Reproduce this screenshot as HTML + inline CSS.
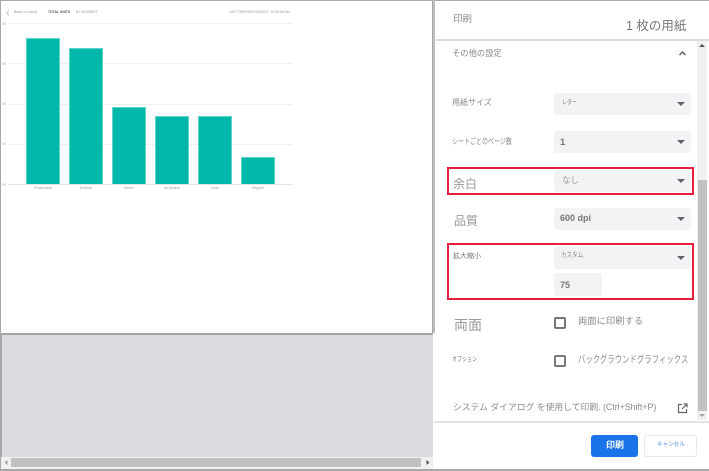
<!DOCTYPE html>
<html><head><meta charset="utf-8"><style>
html,body{margin:0;padding:0;background:#fff}
#r{position:relative;width:709px;height:471px;overflow:hidden;background:#fff;font-family:"Liberation Sans","Noto Sans CJK JP",sans-serif}
#r div,#r span,#r svg{position:absolute}
.t{white-space:nowrap;color:#8a8a8a;line-height:1}
.n{transform-origin:0 0}
.s{left:554px;width:137px;background:#f1f3f4;border-radius:3px}
.s i{position:absolute;right:6px;top:50%;margin-top:-2px;width:0;height:0;border-left:4px solid transparent;border-right:4px solid transparent;border-top:4px solid #5f6368}
.b{background:#00b8aa;width:34px;border:1px solid #5fd3ca;border-bottom:0;box-sizing:border-box}
.g{left:8px;width:285px;height:1px;background:#f0f0f0}
.c{color:#a0a0a0;font-size:3.400px;text-align:center;width:50px;top:186px;line-height:5px}
.y{color:#b0b0b0;font-size:3.500px;left:2px;line-height:4px}
.k{left:553.500px;width:12px;height:12px;border:2px solid #74787d;border-radius:2px;box-sizing:border-box}
.red{border:2px solid #ea1f40;box-sizing:border-box;left:447px;width:247px}
</style></head><body><div id="r">
<div style="left:0;top:0;width:433px;height:471px;background:#dadbdf"></div>
<div style="left:0;top:0;width:709px;height:1.500px;background:#a8a8a8"></div>
<div style="left:0;top:0;width:1.500px;height:471px;background:#a8a8a8"></div>
<div style="left:1px;top:1px;width:431px;height:332px;background:#fff;border-right:1px solid #a9a9a9;border-bottom:2px solid #a5a5a5"></div>

<svg style="left:5px;top:9px" width="6" height="8" viewBox="0 0 6 8"><path d="M4 1.500L1.500 4 4 6.500" fill="none" stroke="#aaa" stroke-width=".7"/></svg>
<div class="t" style="left:14px;top:11px;font-size:3.700px;color:#999">Back to report</div>
<div class="t" style="left:48px;top:11px;font-size:3.400px;color:#555;font-weight:bold">TOTAL UNITS</div>
<div class="t" style="left:76px;top:11px;font-size:3.300px;color:#999">BY SEGMENT</div>
<div class="t" style="left:229px;top:11px;font-size:3.400px;color:#999">LAST REFRESH 6/2/2021, 10:28:58 AM</div>

<div class="g" style="top:23px"></div><div class="g" style="top:63px"></div><div class="g" style="top:104px"></div><div class="g" style="top:144px"></div><div class="g" style="top:184px;background:#e4e4e4"></div>
<div class="t y" style="top:22px">8K</div><div class="t y" style="top:62px">6K</div><div class="t y" style="top:102px">4K</div><div class="t y" style="top:142px">2K</div><div class="t y" style="top:183px">0K</div>
<div class="b" style="left:26px;top:38px;height:146px"></div>
<div class="b" style="left:69px;top:48px;height:136px"></div>
<div class="b" style="left:112px;top:107px;height:77px"></div>
<div class="b" style="left:155px;top:116px;height:68px"></div>
<div class="b" style="left:198px;top:116px;height:68px"></div>
<div class="b" style="left:241px;top:157px;height:27px"></div>
<div class="c" style="left:18px">Productivity</div><div class="c" style="left:61px">Extreme</div><div class="c" style="left:104px">Select</div><div class="c" style="left:147px">All Season</div><div class="c" style="left:190px">Youth</div><div class="c" style="left:233px">Regular</div>

<div style="left:1px;top:457px;width:432px;height:12px;background:#f1f1f1"></div>
<div style="left:11px;top:458px;width:410px;height:9px;background:#c1c1c1"></div>
<svg style="left:3px;top:459px" width="6" height="7"><path d="M4.500 1v5L1.500 3.500z" fill="#a5a5a5"/></svg>
<svg style="left:425px;top:459px" width="6" height="7"><path d="M1.500 1v5l3-2.500z" fill="#505050"/></svg>

<div style="left:433px;top:1px;width:276px;height:468px;background:#fff"></div>
<div style="left:433px;top:0;width:1.500px;height:333px;background:#bdbdbd"></div>
<div style="left:0;top:469px;width:709px;height:2px;background:#a8a8a8"></div>
<div style="left:434px;top:39px;width:275px;height:2px;background:#dcdcdc"></div>
<div class="t" style="left:453px;top:15px;font-size:9.500px">印刷</div>
<div class="t" style="left:626px;top:20px;font-size:12.500px;color:#777">1 枚の用紙</div>

<div style="left:697px;top:41px;width:10px;height:379px;background:#f1f1f1"></div>
<div style="left:698px;top:180px;width:9px;height:231px;background:#c1c1c1"></div>
<svg style="left:697px;top:41px" width="10" height="9"><path d="M2 6l3-3 3 3z" fill="#505050"/></svg>
<svg style="left:697px;top:411px" width="10" height="9"><path d="M2 3l3 3 3-3z" fill="#a5a5a5"/></svg>

<div class="t" style="left:452px;top:49px;font-size:8.300px">その他の設定</div>
<svg style="left:678px;top:50px" width="10" height="7"><path d="M1.500 5L4.500 2 7.500 5" fill="none" stroke="#5f6368" stroke-width="1.500"/></svg>

<div class="t" style="left:452px;top:99px;font-size:8px">用紙サイズ</div>
<div class="s" style="top:93px;height:22px"><span class="t n" style="left:8px;top:7px;font-size:6.500px;transform:scaleX(.77)">レター</span><i></i></div>
<div class="t n" style="left:452px;top:138px;font-size:8px;transform:scaleX(.75)">シートごとのページ数</div>
<div class="s" style="top:131px;height:22px"><span class="t" style="left:6px;top:7px;font-size:9.500px;font-weight:bold;color:#777">1</span><i></i></div>

<div class="t" style="left:453px;top:178px;font-size:12px;color:#999">余白</div>
<div class="s" style="top:170px;height:22px"><span class="t" style="left:8px;top:6px;font-size:8.500px;color:#999">なし</span><i></i></div>
<div class="red" style="top:167px;height:28px"></div>

<div class="t" style="left:454px;top:215px;font-size:12px;color:#999">品質</div>
<div class="s" style="top:208px;height:22px"><span class="t" style="left:6px;top:6px;font-size:9px;font-weight:bold;color:#777">600 dpi</span><i></i></div>

<div class="t" style="left:453px;top:253px;font-size:7px;color:#777">拡大縮小</div>
<div class="s" style="top:246px;height:23px"><span class="t n" style="left:7px;top:6px;font-size:7px;transform:scaleX(.79)">カスタム</span><i></i></div>
<div style="left:554px;top:273px;width:48px;height:23px;background:#f1f3f4;border-radius:3px"><span class="t" style="left:6px;top:8px;font-size:9px;font-weight:bold;color:#777">75</span></div>
<div class="red" style="top:243px;height:57px"></div>

<div class="t" style="left:454px;top:318px;font-size:14px;color:#999">両面</div>
<div class="k" style="top:317px"></div>
<div class="t" style="left:578px;top:317px;font-size:9.300px">両面に印刷する</div>
<div class="t n" style="left:452px;top:357px;font-size:6.500px;color:#777;transform:scaleX(.77)">オプション</div>
<div class="k" style="top:355px"></div>
<div class="t n" style="left:578px;top:356px;font-size:10px;transform:scaleX(.74)">バックグラウンドグラフィックス</div>
<div class="t" style="left:453px;top:403px;font-size:8.800px">システム ダイアログ を使用して印刷. (Ctrl+Shift+P)</div>
<svg style="left:677px;top:403px" width="11" height="11" viewBox="0 0 11 11"><path d="M5 1.500H1.500v8h8V6M6.500 1H10v3.500M10 1L5 6" fill="none" stroke="#666" stroke-width="1.200"/></svg>

<div style="left:434px;top:421px;width:275px;height:2px;background:#e4e4e4"></div>
<div style="left:591px;top:435px;width:47px;height:22px;background:#1a73e8;border-radius:3px"><span class="t" style="left:15px;top:6px;font-size:9px;color:#fff;font-weight:bold">印刷</span></div>
<div style="left:644px;top:435px;width:53px;height:22px;box-sizing:border-box;background:#fff;border:1px solid #e6e8eb;border-radius:3px"><span class="t" style="left:12px;top:7px;font-size:5.600px;color:#8ab0ee;font-weight:bold">キャンセル</span></div>
</div></body></html>
